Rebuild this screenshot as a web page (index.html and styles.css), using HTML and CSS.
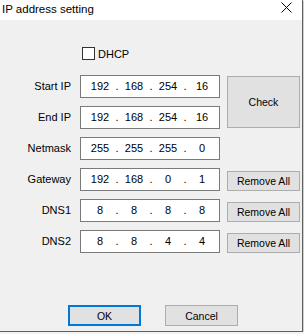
FILE: index.html
```html
<!DOCTYPE html>
<html lang="en">
<head>
	<meta charset="UTF-8">
	<title>IP address setting</title>
	<link rel="stylesheet" href="styles.css">
</head>
<body>
	<div id="window">
		<div class="titlebar">
			<span class="title">IP address setting</span>
			<svg class="close" width="11" height="11" viewBox="0 0 11 11">
				<path d="M0.5 0.5 L10.5 10.5 M10.5 0.5 L0.5 10.5" stroke="#000" stroke-width="1" fill="none"/>
			</svg>
		</div>
		<div class="content">
			<label class="dhcp"><input type="checkbox" id="dhcp"> DHCP</label>

			<div class="form">
				<span class="lbl">Start IP</span>
				<div class="ipbox"><span>192</span><i>.</i><span>168</span><i>.</i><span>254</span><i>.</i><span>16</span></div>
				<button class="btn check">Check</button>

				<span class="lbl">End IP</span>
				<div class="ipbox"><span>192</span><i>.</i><span>168</span><i>.</i><span>254</span><i>.</i><span>16</span></div>

				<span class="lbl">Netmask</span>
				<div class="ipbox"><span>255</span><i>.</i><span>255</span><i>.</i><span>255</span><i>.</i><span>0</span></div>
				<span></span>

				<span class="lbl">Gateway</span>
				<div class="ipbox"><span>192</span><i>.</i><span>168</span><i>.</i><span>0</span><i>.</i><span>1</span></div>
				<button class="btn remove">Remove All</button>

				<span class="lbl">DNS1</span>
				<div class="ipbox"><span>8</span><i>.</i><span>8</span><i>.</i><span>8</span><i>.</i><span>8</span></div>
				<button class="btn remove">Remove All</button>

				<span class="lbl">DNS2</span>
				<div class="ipbox"><span>8</span><i>.</i><span>8</span><i>.</i><span>4</span><i>.</i><span>4</span></div>
				<button class="btn remove">Remove All</button>
			</div>

			<div class="actions">
				<button class="btn ok">OK</button>
				<button class="btn cancel">Cancel</button>
			</div>
		</div>
	</div>
</body>
</html>
```

FILE: styles.css
```css
body {
	margin: 0;
	background-color: #f3f3f3;
	font-family: "Liberation Sans", Arial, sans-serif;
	font-size: 11px;
	color: #000;
}
#window {
	width: 302px;
	height: 331px;
	background-color: #f0f0f0;
	border-right: 1px solid #5f5f5f;
	border-bottom: 1px solid #5f5f5f;
	box-shadow: 1px 1px 0 #cfcfcf;
}
.titlebar {
	height: 20px;
	background-color: #fff;
	display: flex;
	align-items: center;
	justify-content: space-between;
	padding-left: 2px;
}
.title {
	font-size: 11.5px;
	margin-top: -2px;
}
.close {
	margin-right: 10px;
	margin-top: -5px;
}
.dhcp {
	display: flex;
	align-items: center;
	height: 13px;
	margin: 27px 0 0 82px;
	gap: 3px;
}
.dhcp input {
	appearance: none;
	-webkit-appearance: none;
	width: 13px;
	height: 13px;
	margin: 0;
	border: 1px solid #333;
	background-color: #fff;
}
.form {
	display: grid;
	grid-template-columns: 80px 147px 73px;
	grid-auto-rows: 23px;
	row-gap: 8px;
	margin-top: 15px;
}
.lbl {
	text-align: right;
	padding-right: 9px;
	line-height: 23px;
}
.ipbox {
	width: 133px;
	height: 21px;
	border: 1px solid #7a7a7a;
	background-color: #fff;
	display: flex;
	align-items: center;
	padding-left: 5px;
}
.ipbox span {
	width: 28px;
	text-align: center;
	margin-top: -2px;
}
.ipbox i {
	width: 6px;
	text-align: center;
	font-style: normal;
	margin-top: -2px;
}
.btn {
	font-family: "Liberation Sans", Arial, sans-serif;
	font-size: 10.5px;
	color: #000;
	background-color: #e1e1e1;
	border: 1px solid #adadad;
	padding: 0;
	margin: 0;
}
.check {
	grid-row: span 2;
	height: 52px;
	margin-top: 1px;
}
.remove {
	height: 20px;
	align-self: end;
}
.actions {
	display: flex;
	gap: 24px;
	margin: 52px 0 0 68px;
}
.actions .btn {
	width: 73px;
	height: 21px;
}
.ok {
	border: 2px solid #0078d7;
}
```
